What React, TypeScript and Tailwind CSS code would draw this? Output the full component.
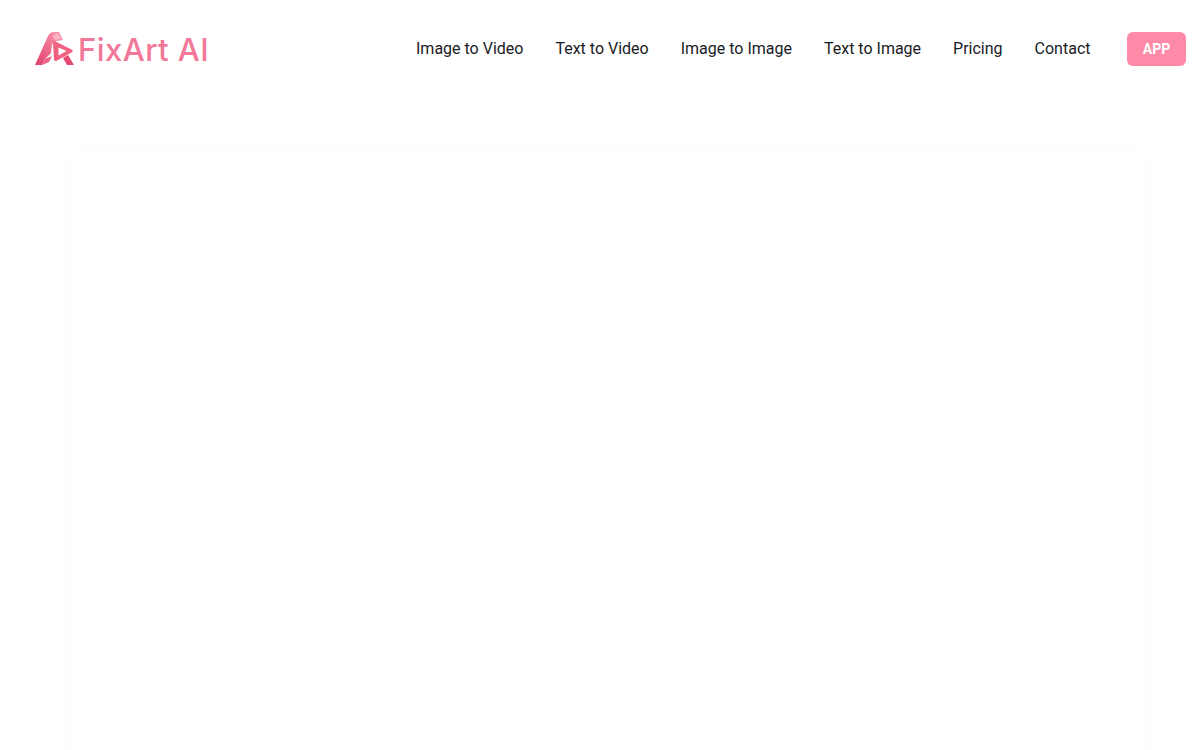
const NAV_LINKS = ['Image to Video', 'Text to Video', 'Image to Image', 'Text to Image', 'Pricing', 'Contact']

function LogoMark(): JSX.Element {
  return (
    <svg width="40" height="36" viewBox="0 0 40 36" className="shrink-0">
      <defs>
        <linearGradient id="logo-a" x1="0" y1="1" x2="1" y2="0">
          <stop offset="0" stopColor="#e03e68" />
          <stop offset="1" stopColor="#fb9db2" />
        </linearGradient>
      </defs>
      {/* A, left leg and apex */}
      <path d="M1 34 L14 5 Q16 1 20 1 L25 1 L29 9 L22 10 L18 13 L17 22 L11 28 L8 34 Z" fill="url(#logo-a)" />
      <path d="M8 34 L11 28 L18 25 L15 31 Z" fill="#ee5f83" />
      <path d="M18 5 L24 2 L27 8 L21 9 Z" fill="#fbb4c4" />
      {/* play triangle, hollow */}
      <path
        d="M19 12 Q19 9.5 21.5 10.5 L37.5 18.5 Q40 20 37.5 21.5 L23 29.5 Q20 31 20 28 Z M24.5 16.5 L24.5 24.5 L32.5 20 Z"
        fill="#f0607f"
        fillRule="evenodd"
      />
      {/* A, right foot */}
      <path d="M29 27 L34 24 L40 34 L33 34 Z" fill="#e44a72" />
    </svg>
  )
}

export default function App(): JSX.Element {
  return (
    <div className="h-[750px] overflow-hidden bg-white font-['Roboto',sans-serif]">
      <header className="flex h-[98px] items-center justify-between pl-[34px] pr-[14px]">
        <div className="flex items-center gap-[4px]">
          <LogoMark />
          <span className="font-['Inter',sans-serif] text-[31px] leading-none font-medium tracking-[0.45px] text-[#f2789a]">FixArt AI</span>
        </div>
        <nav className="flex items-center gap-[32px]">
          {NAV_LINKS.map((link) => (
            <a key={link} className="text-base text-[#1a1a24]">
              {link}
            </a>
          ))}
          <button className="ml-[4.5px] h-[34px] w-[59px] rounded-md bg-[#ff8aa8] text-sm font-bold text-white">APP</button>
        </nav>
      </header>
      <main className="mt-[52px] ml-[68px] h-[640px] w-[1080px] rounded-lg bg-white shadow-[0_0_10px_rgba(0,0,0,0.02)]" />
    </div>
  )
}
